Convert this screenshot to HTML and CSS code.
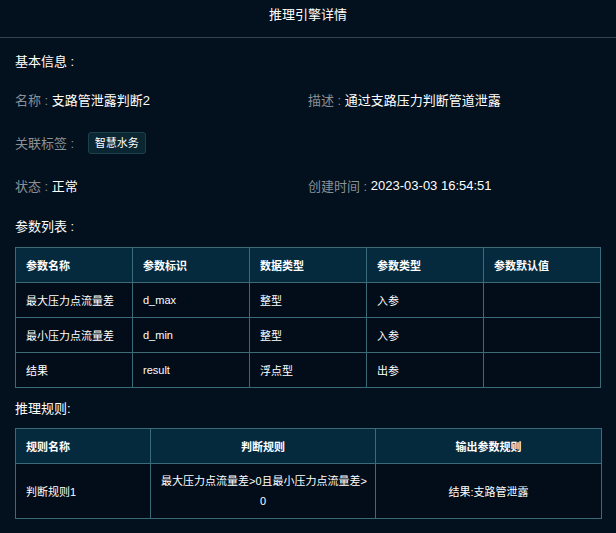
FILE: index.html
```html
<!DOCTYPE html>
<html lang="zh-CN">
<head>
<meta charset="utf-8">
<title>推理引擎详情</title>
<link rel="stylesheet" href="styles.css">
</head>
<body>
<div class="dialog">
  <div class="dialog-header">推理引擎详情</div>
  <div class="dialog-body">
    <div class="section-title first">基本信息 :</div>
    <div class="info-grid">
      <div class="info-item"><span class="label">名称 : </span><span class="value">支路管泄露判断2</span></div>
      <div class="info-item"><span class="label">描述 : </span><span class="value">通过支路压力判断管道泄露</span></div>
      <div class="info-item"><span class="label">关联标签 : </span><span class="tag">智慧水务</span></div>
      <div class="info-item"></div>
      <div class="info-item"><span class="label">状态 : </span><span class="value">正常</span></div>
      <div class="info-item"><span class="label">创建时间 : </span><span class="value">2023-03-03 16:54:51</span></div>
    </div>

    <div class="section-title">参数列表 :</div>
    <table class="data-table params">
      <thead>
        <tr><th>参数名称</th><th>参数标识</th><th>数据类型</th><th>参数类型</th><th>参数默认值</th></tr>
      </thead>
      <tbody>
        <tr><td>最大压力点流量差</td><td>d_max</td><td>整型</td><td>入参</td><td></td></tr>
        <tr><td>最小压力点流量差</td><td>d_min</td><td>整型</td><td>入参</td><td></td></tr>
        <tr><td>结果</td><td>result</td><td>浮点型</td><td>出参</td><td></td></tr>
      </tbody>
    </table>

    <div class="section-title rules-title">推理规则:</div>
    <table class="data-table rules">
      <colgroup><col class="c-name"><col class="c-rule"><col class="c-out"></colgroup>
      <thead>
        <tr><th>规则名称</th><th class="center">判断规则</th><th class="center">输出参数规则</th></tr>
      </thead>
      <tbody>
        <tr><td>判断规则1</td><td class="center multi">最大压力点流量差&gt;0且最小压力点流量差&gt;<br>0</td><td class="center">结果:支路管泄露</td></tr>
      </tbody>
    </table>
  </div>
</div>
</body>
</html>
```

FILE: styles.css
```css
* { box-sizing: border-box; }

html, body {
  margin: 0;
  padding: 0;
  background: #03101d;
}

body {
  font-family: "Liberation Sans", "Noto Sans CJK SC", sans-serif;
  color: #ffffff;
  font-size: 13px;
  width: 616px;
  height: 533px;
  overflow: hidden;
}

.dialog-header {
  height: 38px;
  line-height: 29px;
  text-align: center;
  font-size: 13px;
  color: #ffffff;
  border-bottom: 1px solid #36424d;
}

.dialog-body {
  padding: 0 15px;
}

.section-title {
  height: 20px;
  line-height: 20px;
  font-size: 13px;
  color: #ffffff;
  margin-top: 10px;
  margin-bottom: 10px;
}

.section-title.first {
  margin-top: 14px;
  margin-bottom: 6px;
}

.info-grid {
  display: grid;
  grid-template-columns: 293px 293px;
  grid-auto-rows: 43px;
}

.info-item {
  display: flex;
  align-items: center;
  white-space: pre;
}

.label {
  color: #8a9096;
}

.value {
  color: #ffffff;
}

.tag {
  display: inline-block;
  margin-left: 10px;
  height: 22px;
  line-height: 20px;
  padding: 0 6px;
  font-size: 11px;
  color: #ffffff;
  background: #0a2632;
  border: 1px solid #1d414b;
  border-radius: 3px;
}

.data-table {
  width: 586px;
  border-collapse: collapse;
  table-layout: fixed;
  font-size: 11px;
}

.data-table th,
.data-table td {
  border: 1px solid #3b6b77;
  padding: 0 10px;
  height: 35px;
  text-align: left;
  vertical-align: middle;
  white-space: nowrap;
}

.data-table th {
  background: #052a3e;
  font-weight: bold;
  color: #ffffff;
}

.data-table td {
  background: #020d19;
  color: #ffffff;
}

.data-table .center {
  text-align: center;
}

.rules-title {
  margin-top: 11px;
  margin-bottom: 9px;
}

.rules .c-name { width: 135px; }
.rules .c-rule { width: 225px; }
.rules .c-out { width: 226px; }

.rules td {
  height: 55px;
}

.rules td.multi {
  line-height: 20px;
}
```
